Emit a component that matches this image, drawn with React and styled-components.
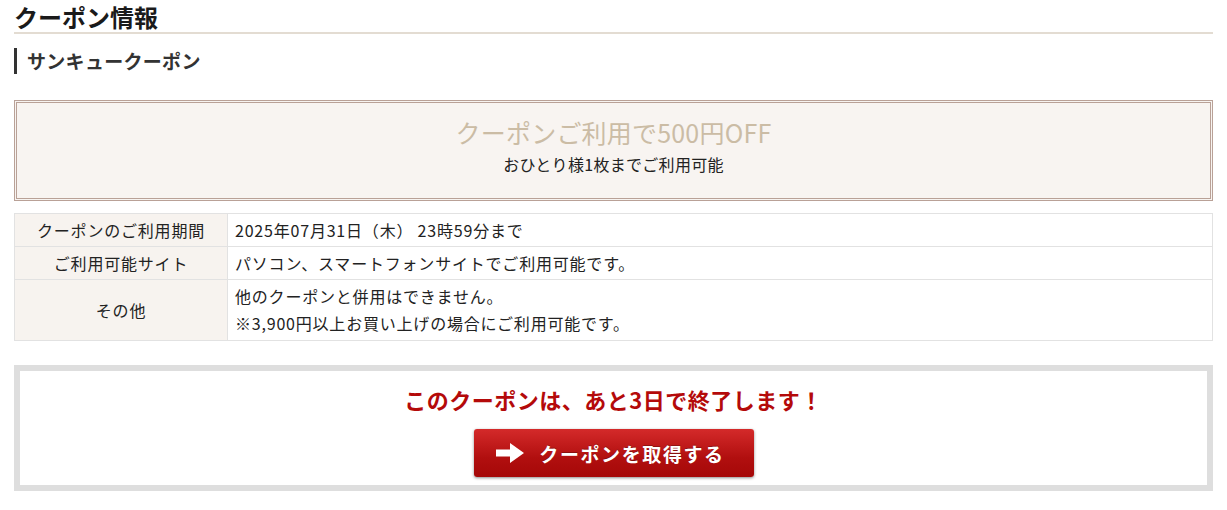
import styled, { createGlobalStyle } from "styled-components";

const GlobalStyle = createGlobalStyle`
  body {
    margin: 0;
    background: #fff;
    font-family: "Noto Sans CJK JP", "Noto Sans", sans-serif;
    color: #222;
  }
`;

const Page = styled.div`
  padding: 0 14px;
`;

const Title = styled.h2`
  margin: 0;
  padding-top: 1px;
  font-size: 24px;
  line-height: 31px;
  font-weight: 700;
  color: #1a1a1a;
  border-bottom: 2px solid #e3dcd2;
`;

const SubTitle = styled.h3`
  margin: 14px 0 0;
  padding-left: 10px;
  border-left: 3px solid #333;
  font-size: 19px;
  line-height: 26px;
  font-weight: 700;
  color: #333;
  letter-spacing: 0.3px;
`;

const CouponBox = styled.div`
  margin-top: 26px;
  height: 101px;
  box-sizing: border-box;
  border: 3px double #b9a197;
  background: #f8f4f1;
  display: flex;
  flex-direction: column;
  align-items: center;
  justify-content: center;
  gap: 5px;
`;

const Amount = styled.div`
  font-size: 25px;
  line-height: 32px;
  color: #cbbca5;
  margin-top: -11px;
  letter-spacing: 0.2px;
`;

const Limit = styled.div`
  font-size: 16px;
  line-height: 22px;
  color: #222;
  letter-spacing: 0.3px;
`;

const Table = styled.table`
  margin-top: 12px;
  width: 100%;
  border-collapse: collapse;
  font-size: 16px;
  letter-spacing: 0.8px;
  color: #222;
`;

const Th = styled.th`
  width: 212px;
  font-weight: 400;
  background: #f7f3ef;
  border: 1px solid #e2e2e2;
  text-align: center;
  padding: 0;
  height: 32px;
`;

const Td = styled.td`
  border: 1px solid #e2e2e2;
  padding: ${({ $multi }) => ($multi ? "3px 7px 3px" : "0 7px")};
  line-height: ${({ $multi }) => ($multi ? "27px" : "32px")};
`;

const EndBox = styled.div`
  margin-top: 24px;
  border: 6px solid #dedede;
  height: 126px;
  box-sizing: border-box;
  display: flex;
  flex-direction: column;
  align-items: center;
  padding-top: 13px;
`;

const Warning = styled.div`
  font-size: 22px;
  line-height: 30px;
  font-weight: 700;
  color: #b40a0a;
  letter-spacing: 0.5px;
`;

const GetButton = styled.button`
  margin-top: 15px;
  width: 280px;
  height: 48px;
  border: none;
  border-radius: 3px;
  background: linear-gradient(#d42a2a, #b10f0f 60%, #a50808);
  box-shadow: 0 1px 3px rgba(0, 0, 0, 0.45);
  color: #fff;
  font-family: inherit;
  font-size: 19px;
  font-weight: 700;
  letter-spacing: 1.6px;
  display: flex;
  align-items: center;
  justify-content: center;
  gap: 15px;
  padding-right: 12px;
  cursor: pointer;
  text-shadow: 0 -1px 0 rgba(0, 0, 0, 0.25);
`;

function ArrowIcon() {
  return (
    <svg width="28" height="20" viewBox="0 0 28 20">
      <path d="M0 6.5h14V0l14 10-14 10v-6.5H0z" fill="#fff" />
    </svg>
  );
}

export default function App() {
  return (
    <>
      <GlobalStyle />
      <Page>
        <Title>クーポン情報</Title>
        <SubTitle>サンキュークーポン</SubTitle>
        <CouponBox>
          <Amount>クーポンご利用で500円OFF</Amount>
          <Limit>おひとり様1枚までご利用可能</Limit>
        </CouponBox>
        <Table>
          <tbody>
            <tr>
              <Th>クーポンのご利用期間</Th>
              <Td>2025年07月31日（木） 23時59分まで</Td>
            </tr>
            <tr>
              <Th>ご利用可能サイト</Th>
              <Td>パソコン、スマートフォンサイトでご利用可能です。</Td>
            </tr>
            <tr>
              <Th>その他</Th>
              <Td $multi>
                他のクーポンと併用はできません。
                <br />
                ※3,900円以上お買い上げの場合にご利用可能です。
              </Td>
            </tr>
          </tbody>
        </Table>
        <EndBox>
          <Warning>このクーポンは、あと3日で終了します！</Warning>
          <GetButton>
            <ArrowIcon />
            クーポンを取得する
          </GetButton>
        </EndBox>
      </Page>
    </>
  );
}
